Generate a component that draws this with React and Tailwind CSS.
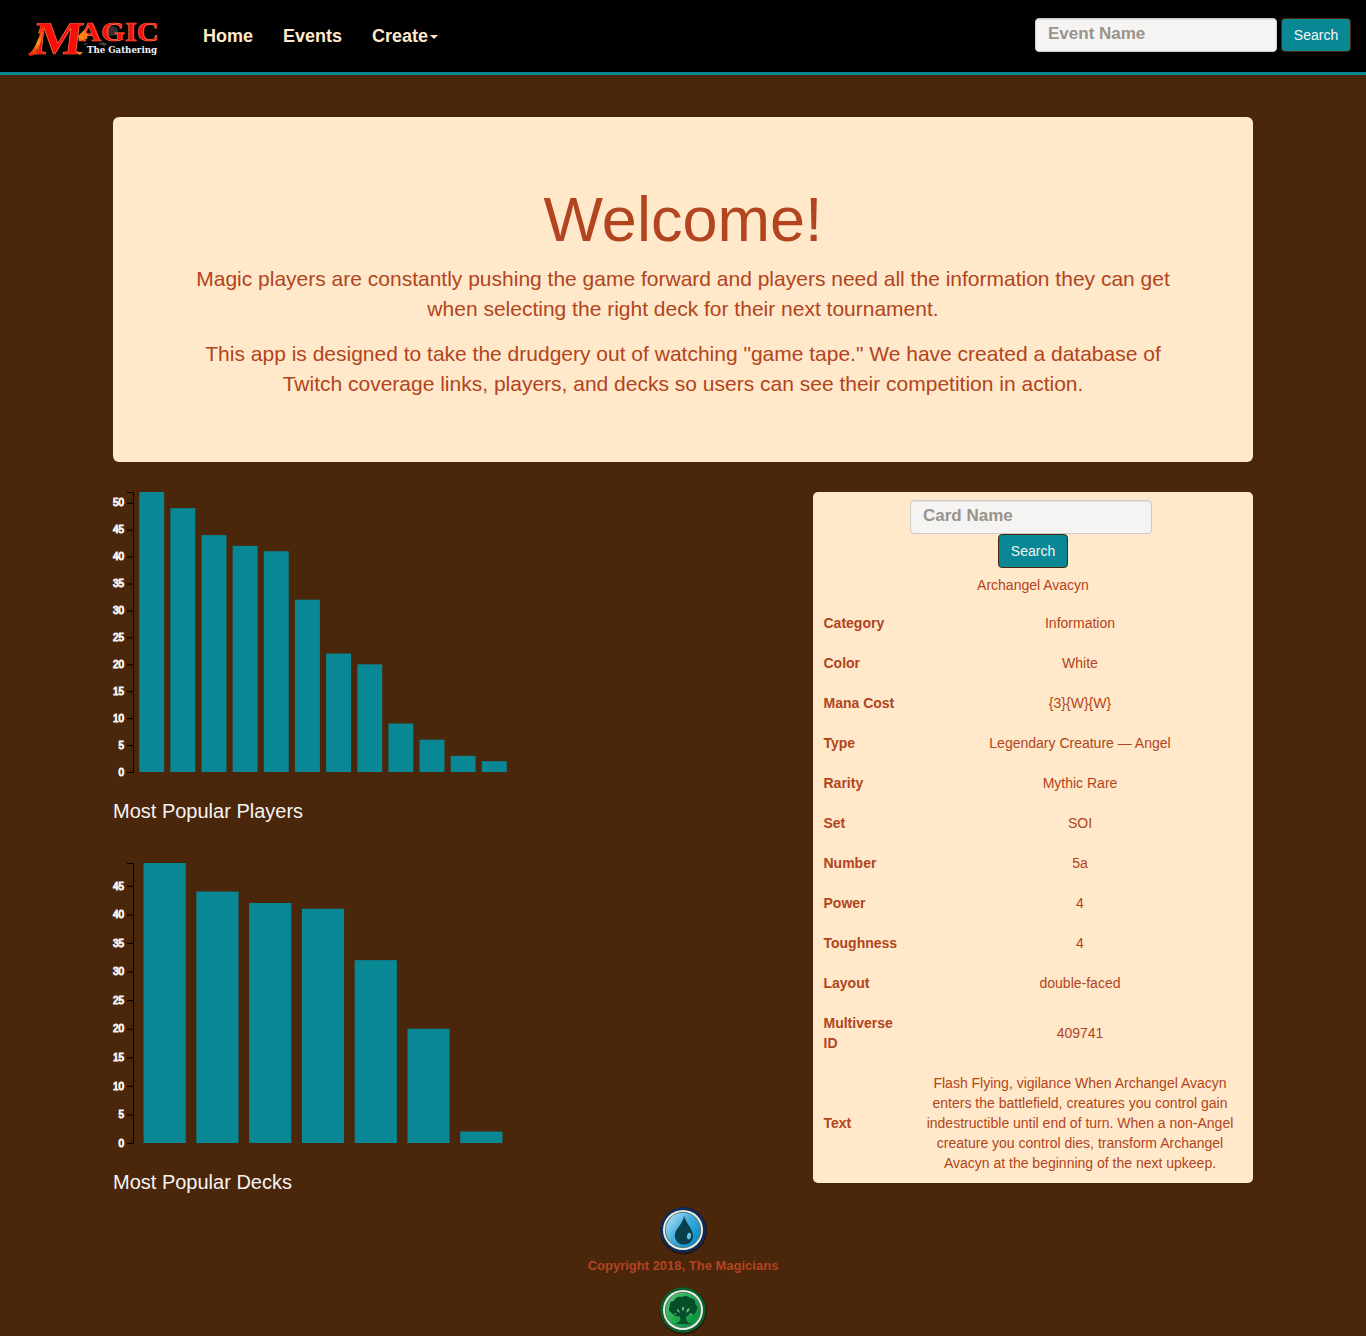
import React from "react";

const players = [52, 49, 44, 42, 41, 32, 22, 20, 9, 6, 3, 2];
const decks = [49, 44, 42, 41, 32, 20, 2];

const cardRows = [
  ["Category", "Information"],
  ["Color", "White"],
  ["Mana Cost", "{3}{W}{W}"],
  ["Type", "Legendary Creature — Angel"],
  ["Rarity", "Mythic Rare"],
  ["Set", "SOI"],
  ["Number", "5a"],
  ["Power", "4"],
  ["Toughness", "4"],
  ["Layout", "double-faced"],
  ["Multiverse ID", "409741"],
  [
    "Text",
    "Flash Flying, vigilance When Archangel Avacyn enters the battlefield, creatures you control gain indestructible until end of turn. When a non-Angel creature you control dies, transform Archangel Avacyn at the beginning of the next upkeep.",
  ],
];

function BarChart({ data }) {
  const height = 280;
  const max = Math.max(...data);
  const step = 380 / (data.length + 0.2);
  const y = (v) => height - (v / max) * height;
  const ticks = [];
  for (let v = 0; v <= max; v += 5) ticks.push(v);
  return (
    <svg width="400" height="281" className="block overflow-visible">
      {data.map((v, i) => (
        <rect
          key={i}
          x={20 + step * (i + 0.2)}
          y={y(v)}
          width={step * 0.8}
          height={height - y(v)}
          fill="#088794"
        />
      ))}
      <path d="M14 .5H20.5V280.5H14" fill="none" stroke="#000" />
      {ticks.map((v) => (
        <g key={v} transform={`translate(20 ${y(v) + 0.5})`}>
          <line x1="-6" x2="0" stroke="#000" />
          <text
            x="-9"
            dy="0.32em"
            textAnchor="end"
            fontSize="10"
            fill="#f6f4f2"
            stroke="#f6f4f2"
            fontFamily="Liberation Sans, sans-serif"
          >
            {v}
          </text>
        </g>
      ))}
    </svg>
  );
}

function Logo() {
  return (
    <svg width="140" height="42" viewBox="24 17 140 42" className="block" role="img">
      <defs>
        <linearGradient id="fire" gradientUnits="userSpaceOnUse" x1="0" y1="21" x2="0" y2="56">
          <stop offset="0.1" stopColor="#f80f08" />
          <stop offset="0.35" stopColor="#fb4f0b" />
          <stop offset="0.62" stopColor="#fb9a16" />
          <stop offset="1" stopColor="#f21608" />
        </linearGradient>
        <linearGradient id="fireSmall" gradientUnits="userSpaceOnUse" x1="0" y1="22" x2="0" y2="42">
          <stop offset="0.1" stopColor="#f80f08" />
          <stop offset="0.6" stopColor="#fb8a18" />
          <stop offset="1" stopColor="#f5280c" />
        </linearGradient>
      </defs>
      <ellipse cx="111" cy="31" rx="7" ry="5" fill="#333" />
      <path d="M83 45l5-3-2 3zM98 44l5-2 4 2-2 2z" fill="#444" />
      <g fontFamily="Liberation Serif, serif" fontWeight="700" strokeLinejoin="round">
        <text
          transform="translate(32.5 54) skewX(-7)"
          fontSize="47"
          textLength="49"
          lengthAdjust="spacingAndGlyphs"
          fill="url(#fire)"
          stroke="#ff6b45"
          strokeWidth="0.7"
        >
          M
        </text>
        <text
          transform="translate(79 41)"
          fontSize="28"
          textLength="80"
          lengthAdjust="spacingAndGlyphs"
          fill="url(#fireSmall)"
          stroke="#ff6b45"
          strokeWidth="0.7"
        >
          AGIC
        </text>
        <path d="M28 54q6-3 10-15l3-5-3-1 3-9 5-1-5 18q-3 9-6 12l2 1-7 2z" fill="url(#fire)" />
        <path d="M76 52l7 0-3 3zM78 36l7-7 1 4 2 1-1 5-8 2z" fill="#fa8216" />
      </g>
      <text
        x="87"
        y="52.6"
        fontFamily="DejaVu Serif, serif"
        fontWeight="700"
        fontSize="9.5"
        textLength="70"
        lengthAdjust="spacingAndGlyphs"
        fill="#f2f2f2"
      >
        The Gathering
      </text>
    </svg>
  );
}

function ManaDisc({ id, rim, light, mid, dark, children }) {
  return (
    <svg width="50" height="50" viewBox="0 0 50 50" className="block">
      <defs>
        <linearGradient id={id} x1="0" y1="0" x2="1" y2="0.8">
          <stop offset="0" stopColor={light} />
          <stop offset="0.5" stopColor={mid} />
          <stop offset="1" stopColor={dark} />
        </linearGradient>
      </defs>
      <circle cx="25.5" cy="26" r="23.5" fill="#2d1607" />
      <circle cx="25" cy="25" r="22.8" fill={rim} />
      <circle cx="25" cy="25" r="20" fill="#f0f3e8" />
      <circle cx="25" cy="25" r="18.2" fill="#5d7773" />
      <circle cx="25" cy="25" r="17.2" fill={`url(#${id})`} />
      {children}
    </svg>
  );
}

function WaterIcon() {
  return (
    <ManaDisc id="water" rim="#0b2c5c" light="#c3e7f7" mid="#43aee0" dark="#0687c4">
      <path
        d="M26.5 10.5c-.7 5.5 8.5 12.500 8.500 20.500 0 5.200-3.800 8.500-9 8.500s-9.200-3.800-9.200-8.800c0-6.700 7-9.800 9.700-20.200z"
        fill="#08404a"
      />
      <ellipse cx="31" cy="31" rx="2" ry="3.2" fill="#6fc3e2" transform="rotate(12 31 31)" />
    </ManaDisc>
  );
}

function TreeIcon() {
  return (
    <ManaDisc id="forest" rim="#08602b" light="#62c878" mid="#20ae50" dark="#07913b">
      <path
        d="M14 28c-3-1-4-4-2-7-1-3 1-5 4-5 1-4 5-5 8-4 3-2 7-1 8 1 4 0 6 3 5 6 3 2 3 5 1 7 0 3-3 4-5 3-2 1-3 1-4 2-2 2-1 5 2 7l3 1H17l4-2c2-2 2-4 0-6-2 1-5 0-7-3z"
        fill="#064d29"
      />
      <path
        d="M19 24l2 1 1 3-3-2zM24 22h2v4l-2-1zM29 24l3-1-1 3-3 2zM16 28l3 1-2 1zM34 28l-3 1 2 2z"
        fill="#58b970"
      />
    </ManaDisc>
  );
}

function SearchInput({ label }) {
  return (
    <input
      type="text"
      placeholder={label}
      className="block h-[34px] w-[242px] rounded border border-[#ccc] bg-[#f6f4f2] px-3 pt-1.5 pb-2 text-[17px] leading-5 font-bold text-[#555] shadow-[inset_0_1px_1px_rgba(0,0,0,0.075)] placeholder:text-[#999389] placeholder:opacity-100"
    />
  );
}

function SearchButton() {
  return (
    <button className="block h-[34px] w-[70px] rounded border border-[#4a260b] bg-[#088794] text-center text-[14px] leading-5 text-[#f6f4f2]">
      Search
    </button>
  );
}

export default function App() {
  return (
    <div className="h-[1336px] overflow-hidden bg-[#4a260b] font-['Liberation_Sans',Arial,sans-serif] text-[14px] leading-5 text-[#b24420]">
      <nav className="flex h-[75px] items-start border-b-[3px] border-[#088794] bg-black pl-6 pr-[15px]">
        <div className="mt-[17px]">
          <Logo />
        </div>
        <div className="mt-[26px] ml-[39px] flex gap-[30px] text-[18px] leading-5 font-bold text-[#ffe9ca]">
          <a>Home</a>
          <a>Events</a>
          <a className="flex items-center">
            Create
            <span className="mt-0.5 ml-0.5 border-x-4 border-t-4 border-x-transparent border-t-[#ffe9ca]" />
          </a>
        </div>
        <form className="mt-[18px] ml-auto flex gap-1">
          <SearchInput label="Event Name" />
          <SearchButton />
        </form>
      </nav>

      <main className="mx-auto mt-[42px] w-[1140px]">
        <section className="h-[345px] rounded-md bg-[#ffe9ca] px-[60px] pt-[68px] text-center">
          <h1 className="text-[63px] leading-[69px]">Welcome!</h1>
          <p className="mt-[10px] text-[21px] leading-[30px]">
            Magic players are constantly pushing the game forward and players need all the information they can get
            <br />
            when selecting the right deck for their next tournament.
          </p>
          <p className="mt-[15px] text-[21px] leading-[30px]">
            This app is designed to take the drudgery out of watching "game tape." We have created a database of
            <br />
            Twitch coverage links, players, and decks so users can see their competition in action.
          </p>
        </section>

        <div className="mt-[30px] flex h-[714px] items-start justify-between">
          <div className="text-[20px] leading-[22px] text-[#f6f4f2]">
            <BarChart data={players} />
            <h4 className="mt-[27px]">Most Popular Players</h4>
            <div className="mt-[41px]">
              <BarChart data={decks} />
            </div>
            <h4 className="mt-[27px]">Most Popular Decks</h4>
          </div>

          <aside className="h-[691px] w-[440px] rounded-[5px] bg-[#ffe9ca] pt-2 text-center">
            <form className="flex flex-col items-center">
              <div className="mr-1">
                <SearchInput label="Card Name" />
              </div>
              <SearchButton />
            </form>
            <p className="mt-[7px] mb-2">Archangel Avacyn</p>
            <dl>
              {cardRows.map(([name, value]) => (
                <div key={name} className="flex items-center py-[10px]">
                  <dt className="w-[94px] shrink-0 pr-2 pl-[10.5px] text-left font-bold">{name}</dt>
                  <dd className="flex-1 pr-[13px] pl-[13px]">{value}</dd>
                </div>
              ))}
            </dl>
          </aside>
        </div>
      </main>

      <footer className="flex flex-col items-center">
        <div className="-mt-px">
          <WaterIcon />
        </div>
        <p className="mt-px mb-[9px] text-[13px] leading-5 font-bold">Copyright 2018, The Magicians</p>
        <TreeIcon />
      </footer>
    </div>
  );
}
